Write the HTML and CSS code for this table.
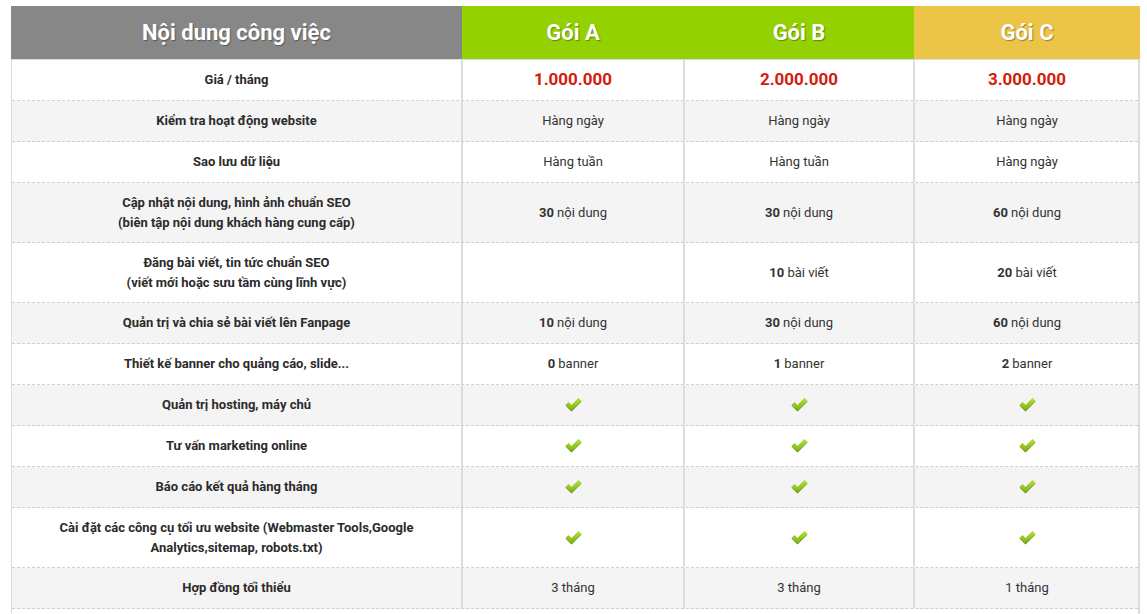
FILE: index.html
```html
<!DOCTYPE html>
<html lang="vi">
<head>
<meta charset="utf-8">
<title>Bảng giá</title>
<link rel="stylesheet" href="styles.css">
</head>
<body>
<svg width="0" height="0" class="defs" aria-hidden="true">
  <defs>
    <linearGradient id="chk" x1="0" y1="0" x2="0" y2="1">
      <stop offset="0" stop-color="#b5e33a"/>
      <stop offset="1" stop-color="#7fb211"/>
    </linearGradient>
    <symbol id="check" viewBox="0 0 17 14">
      <polygon points="0.5,7.5 3.5,4.5 6.5,7.5 13.5,0.5 16.5,3.5 6.5,13.5" fill="#5f8a10"/>
      <polygon points="0.5,7 3.5,4 6.5,7 13.5,0 16.5,3 6.5,12.5" fill="url(#chk)"/>
    </symbol>
  </defs>
</svg>
<div class="pricing">
  <div class="row head">
    <div class="cell h-title">Nội dung công việc</div>
    <div class="cell h-green">Gói A</div>
    <div class="cell h-green">Gói B</div>
    <div class="cell h-yellow">Gói C</div>
  </div>
  <div class="row odd">
    <div class="cell label">Giá / tháng</div>
    <div class="cell price">1.000.000</div>
    <div class="cell price">2.000.000</div>
    <div class="cell price">3.000.000</div>
  </div>
  <div class="row even">
    <div class="cell label">Kiểm tra hoạt động website</div>
    <div class="cell">Hàng ngày</div>
    <div class="cell">Hàng ngày</div>
    <div class="cell">Hàng ngày</div>
  </div>
  <div class="row odd">
    <div class="cell label">Sao lưu dữ liệu</div>
    <div class="cell">Hàng tuần</div>
    <div class="cell">Hàng tuần</div>
    <div class="cell">Hàng ngày</div>
  </div>
  <div class="row even tall">
    <div class="cell label">Cập nhật nội dung, hình ảnh chuẩn SEO<br>(biên tập nội dung khách hàng cung cấp)</div>
    <div class="cell"><b>30</b>&nbsp;nội dung</div>
    <div class="cell"><b>30</b>&nbsp;nội dung</div>
    <div class="cell"><b>60</b>&nbsp;nội dung</div>
  </div>
  <div class="row odd tall">
    <div class="cell label">Đăng bài viết, tin tức chuẩn SEO<br>(viết mới hoặc sưu tầm cùng lĩnh vực)</div>
    <div class="cell"></div>
    <div class="cell"><b>10</b>&nbsp;bài viết</div>
    <div class="cell"><b>20</b>&nbsp;bài viết</div>
  </div>
  <div class="row even">
    <div class="cell label">Quản trị và chia sẻ bài viết lên Fanpage</div>
    <div class="cell"><b>10</b>&nbsp;nội dung</div>
    <div class="cell"><b>30</b>&nbsp;nội dung</div>
    <div class="cell"><b>60</b>&nbsp;nội dung</div>
  </div>
  <div class="row odd">
    <div class="cell label">Thiết kế banner cho quảng cáo, slide...</div>
    <div class="cell"><b>0</b>&nbsp;banner</div>
    <div class="cell"><b>1</b>&nbsp;banner</div>
    <div class="cell"><b>2</b>&nbsp;banner</div>
  </div>
  <div class="row even">
    <div class="cell label">Quản trị hosting, máy chủ</div>
    <div class="cell"><svg class="check"><use href="#check"/></svg></div>
    <div class="cell"><svg class="check"><use href="#check"/></svg></div>
    <div class="cell"><svg class="check"><use href="#check"/></svg></div>
  </div>
  <div class="row odd">
    <div class="cell label">Tư vấn marketing online</div>
    <div class="cell"><svg class="check"><use href="#check"/></svg></div>
    <div class="cell"><svg class="check"><use href="#check"/></svg></div>
    <div class="cell"><svg class="check"><use href="#check"/></svg></div>
  </div>
  <div class="row even">
    <div class="cell label">Báo cáo kết quả hàng tháng</div>
    <div class="cell"><svg class="check"><use href="#check"/></svg></div>
    <div class="cell"><svg class="check"><use href="#check"/></svg></div>
    <div class="cell"><svg class="check"><use href="#check"/></svg></div>
  </div>
  <div class="row odd tall">
    <div class="cell label">Cài đặt các công cụ tối ưu website (Webmaster Tools,Google<br>Analytics,sitemap, robots.txt)</div>
    <div class="cell"><svg class="check"><use href="#check"/></svg></div>
    <div class="cell"><svg class="check"><use href="#check"/></svg></div>
    <div class="cell"><svg class="check"><use href="#check"/></svg></div>
  </div>
  <div class="row even">
    <div class="cell label">Hợp đồng tối thiểu</div>
    <div class="cell">3 tháng</div>
    <div class="cell">3 tháng</div>
    <div class="cell">1 tháng</div>
  </div>
  <div class="footer-row"></div>
</div>
</body>
</html>
```
FILE: styles.css
```css
* { box-sizing: border-box; }
html, body { margin: 0; padding: 0; background: #fff; }
body {
  font-family: Roboto, "Liberation Sans", Arial, sans-serif;
  color: #333;
  padding: 6px 0 0 11px;
}
.defs { position: absolute; width: 0; height: 0; overflow: hidden; }
.pricing {
  width: 1129px;
  border-left: 1px solid #dcdcdc;
  border-right: 2px solid #dcdcdc;
}
.row {
  display: grid;
  grid-template-columns: 449px 222px 230px 226px;
  height: 41px;
  border-bottom: 1px dashed #cfcfcf;
}
.row.tall { height: 60px; }
.row.odd { background: #fff; }
.row.even { background: #f4f4f4; }
.footer-row { height: 20px; background: #fff; }
.cell {
  display: flex;
  align-items: center;
  justify-content: center;
  text-align: center;
  font-size: 13px;
  line-height: 20px;
  border-left: 2px solid #dcdcdc;
}
.cell:first-child { border-left: none; }
.cell b { font-weight: 700; color: #333; }
.label { font-weight: 700; color: #2b2b2b; font-size: 13px; }
.price { color: #d41b0c; font-weight: 700; font-size: 17px; padding-bottom: 3px; }
.head {
  height: 54px;
  border-bottom: 1px solid #dcdcdc;
  margin-left: -1px;
  margin-right: -2px;
  grid-template-columns: 451px 222px 230px 226px;
}
.head .cell {
  border-left: none;
  color: #fff;
  font-weight: 700;
  font-size: 22px;
  text-shadow: 1px 1px 1px rgba(0,0,0,0.35);
}
.h-title { background: #878787; }
.h-green { background: #93d100; }
.h-yellow { background: #ecc447; }
.check { width: 17px; height: 14px; display: block; }
```
